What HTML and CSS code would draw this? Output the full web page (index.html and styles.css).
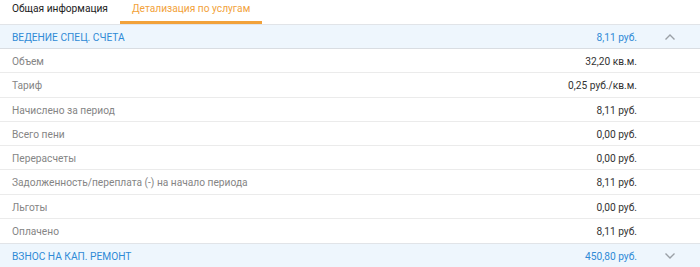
FILE: index.html
```html
<!DOCTYPE html>
<html lang="ru">
<head>
    <meta charset="UTF-8">
    <title>Детализация по услугам</title>
    <link rel="stylesheet" href="styles.css">
</head>
<body>
    <div class="tabs">
        <div class="tab">Общая информация</div>
        <div class="tab active">Детализация по услугам</div>
    </div>
    <div class="service">
        <div class="service-head">
            <span class="service-name">ВЕДЕНИЕ СПЕЦ. СЧЕТА</span>
            <span class="service-sum">8,11 руб.</span>
            <svg class="chevron" width="12" height="8" viewBox="0 0 12 8"><path d="M1.5 6.5 L6 2 L10.5 6.5" fill="none" stroke="#9aa0a6" stroke-width="1.4"/></svg>
        </div>
        <div class="row"><span class="label">Объем</span><span class="value">32,20 кв.м.</span></div>
        <div class="row"><span class="label">Тариф</span><span class="value">0,25 руб./кв.м.</span></div>
        <div class="row"><span class="label">Начислено за период</span><span class="value">8,11 руб.</span></div>
        <div class="row"><span class="label">Всего пени</span><span class="value">0,00 руб.</span></div>
        <div class="row"><span class="label">Перерасчеты</span><span class="value">0,00 руб.</span></div>
        <div class="row"><span class="label">Задолженность/переплата (-) на начало периода</span><span class="value">8,11 руб.</span></div>
        <div class="row"><span class="label">Льготы</span><span class="value">0,00 руб.</span></div>
        <div class="row"><span class="label">Оплачено</span><span class="value">8,11 руб.</span></div>
    </div>
    <div class="service">
        <div class="service-head">
            <span class="service-name">ВЗНОС НА КАП. РЕМОНТ</span>
            <span class="service-sum">450,80 руб.</span>
            <svg class="chevron" width="12" height="8" viewBox="0 0 12 8"><path d="M1.5 1.5 L6 6 L10.5 1.5" fill="none" stroke="#9aa0a6" stroke-width="1.4"/></svg>
        </div>
    </div>
</body>
</html>
```

FILE: styles.css
```css
body { margin: 0; font-family: Roboto, "Liberation Sans", sans-serif; font-size: 10.2px; background: #fff; color: #333; }
.tabs { display: flex; height: 24px; }
.tab { padding: 0 12px; line-height: 18px; border-bottom: 3px solid transparent; height: 24px; box-sizing: border-box; color: #222; }
.tab.active { color: #f2a23a; border-bottom-color: #f2a23a; }
.service-head { display: flex; align-items: center; height: 25px; box-sizing: border-box; background: #eef6fd; border-top: 1px solid #e1e4e8; border-bottom: 1px solid #d9dde2; padding: 1px 12px 0; color: #2f8ad6; }
.service-name { flex: 1; }
.service-sum { margin-right: 27px; }
.chevron { margin-right: 12px; }
.row { display: flex; justify-content: space-between; align-items: center; height: 24.25px; box-sizing: border-box; border-bottom: 1px solid #ebebeb; padding: 2px 63px 0 12px; }
.row:last-child { border-bottom: none; }
.label { color: #858585; }
.value { color: #333; }
```
